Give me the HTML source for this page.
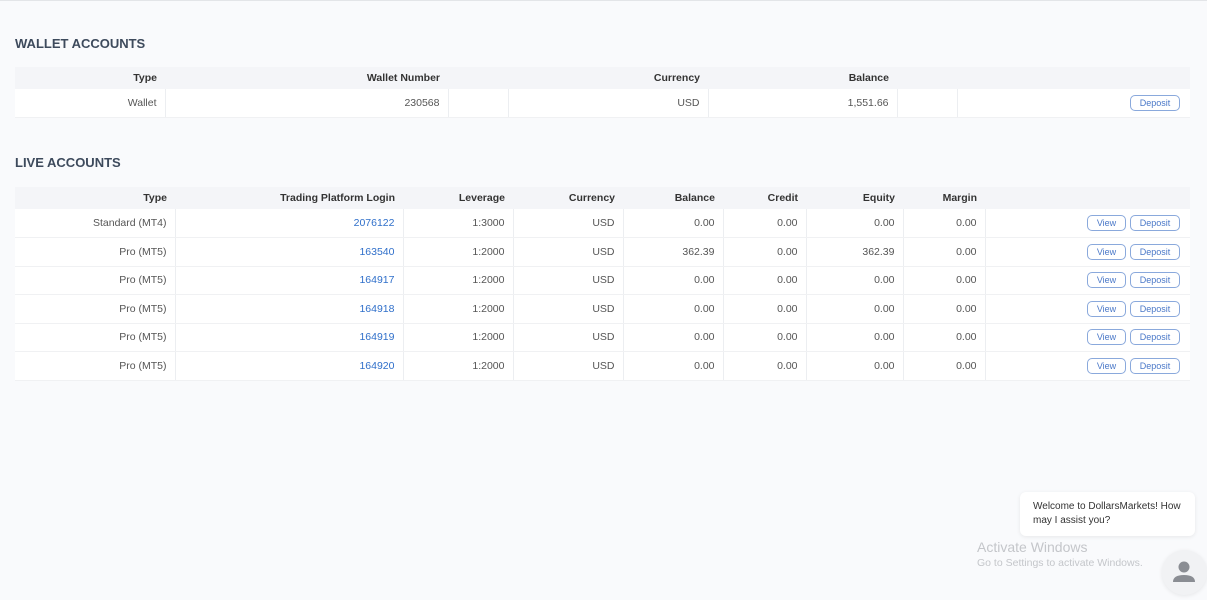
<!DOCTYPE html>
<html><head><style>
body{margin:0;width:1207px;height:600px;background:#f9fafc;font-family:"Liberation Sans",sans-serif;position:relative;overflow:hidden}
.top{position:absolute;left:0;top:0;width:1207px;height:1px;background:#e3e5e8}
h2{position:absolute;left:15px;margin:0;font-size:13px;font-weight:bold;color:#3d4a5c;letter-spacing:0}
table{position:absolute;left:15px;border-collapse:collapse;table-layout:fixed;font-size:10.5px;background:#fff}
th{background:#f4f5f8;color:#333;font-weight:bold;text-align:right;padding:0 8px;height:22px}
td{color:#555;text-align:right;padding:0 8px;border-right:1px solid #eceef1;border-bottom:1px solid #f0f1f3}
td:last-child{border-right:none}
a{color:#2f6fca;text-decoration:none}
.b{display:inline-block;border:1px solid #8aa9dc;border-radius:5px;color:#4a78c8;font-size:9px;height:14px;line-height:14px;text-align:center;margin-left:4px;vertical-align:middle}
.v{width:37px}.d{width:48px}
</style></head><body>
<div class="top"></div>
<h2 style="top:36px">WALLET ACCOUNTS</h2>
<table style="top:67px;width:1175px">
<colgroup><col style="width:150px"><col style="width:283px"><col style="width:60px"><col style="width:200px"><col style="width:189px"><col style="width:60px"><col style="width:233px"></colgroup>
<tr><th>Type</th><th>Wallet Number</th><th></th><th>Currency</th><th>Balance</th><th></th><th></th></tr>
<tr style="height:28px"><td>Wallet</td><td>230568</td><td></td><td>USD</td><td>1,551.66</td><td></td><td style="padding-right:10px"><span class="b d">Deposit</span></td></tr>
</table>
<h2 style="top:155px">LIVE ACCOUNTS</h2>
<table style="top:187px;width:1175px">
<colgroup><col style="width:160px"><col style="width:228px"><col style="width:110px"><col style="width:110px"><col style="width:100px"><col style="width:83px"><col style="width:97px"><col style="width:82px"><col style="width:205px"></colgroup>
<tr><th>Type</th><th>Trading Platform Login</th><th>Leverage</th><th>Currency</th><th>Balance</th><th>Credit</th><th>Equity</th><th>Margin</th><th></th></tr>
<tr style="height:28.5px"><td>Standard (MT4)</td><td><a>2076122</a></td><td>1:3000</td><td>USD</td><td>0.00</td><td>0.00</td><td>0.00</td><td>0.00</td><td style="padding-right:10px"><span class="b v">View</span><span class="b d">Deposit</span></td></tr>
<tr style="height:28.5px"><td>Pro (MT5)</td><td><a>163540</a></td><td>1:2000</td><td>USD</td><td>362.39</td><td>0.00</td><td>362.39</td><td>0.00</td><td style="padding-right:10px"><span class="b v">View</span><span class="b d">Deposit</span></td></tr>
<tr style="height:28.5px"><td>Pro (MT5)</td><td><a>164917</a></td><td>1:2000</td><td>USD</td><td>0.00</td><td>0.00</td><td>0.00</td><td>0.00</td><td style="padding-right:10px"><span class="b v">View</span><span class="b d">Deposit</span></td></tr>
<tr style="height:28.5px"><td>Pro (MT5)</td><td><a>164918</a></td><td>1:2000</td><td>USD</td><td>0.00</td><td>0.00</td><td>0.00</td><td>0.00</td><td style="padding-right:10px"><span class="b v">View</span><span class="b d">Deposit</span></td></tr>
<tr style="height:28.5px"><td>Pro (MT5)</td><td><a>164919</a></td><td>1:2000</td><td>USD</td><td>0.00</td><td>0.00</td><td>0.00</td><td>0.00</td><td style="padding-right:10px"><span class="b v">View</span><span class="b d">Deposit</span></td></tr>
<tr style="height:28.5px"><td>Pro (MT5)</td><td><a>164920</a></td><td>1:2000</td><td>USD</td><td>0.00</td><td>0.00</td><td>0.00</td><td>0.00</td><td style="padding-right:10px"><span class="b v">View</span><span class="b d">Deposit</span></td></tr>
</table>
<div style="position:absolute;left:1020px;top:492px;width:175px;height:44px;background:#fff;border-radius:6px;box-shadow:0 1px 4px rgba(0,0,0,.08);font-size:10px;color:#333;line-height:14px;padding:8px 0 0 13px;box-sizing:border-box">Welcome to DollarsMarkets! How may I assist you?</div>
<div style="position:absolute;left:977px;top:539px;font-size:14px;color:#c4c6ca">Activate Windows</div>
<div style="position:absolute;left:977px;top:557px;font-size:10.5px;color:#c4c6ca">Go to Settings to activate Windows.</div>
<div style="position:absolute;left:1162px;top:550px;width:45px;height:45px;border-radius:50%;background:#f1f2f4;box-shadow:0 1px 4px rgba(0,0,0,.08)">
<svg width="45" height="45" viewBox="0 0 45 45"><circle cx="22" cy="17" r="5.5" fill="#8a8d93"/><path d="M11 32 Q11 25 22 25 Q33 25 33 32 Z" fill="#8a8d93"/></svg></div>
</body></html>
